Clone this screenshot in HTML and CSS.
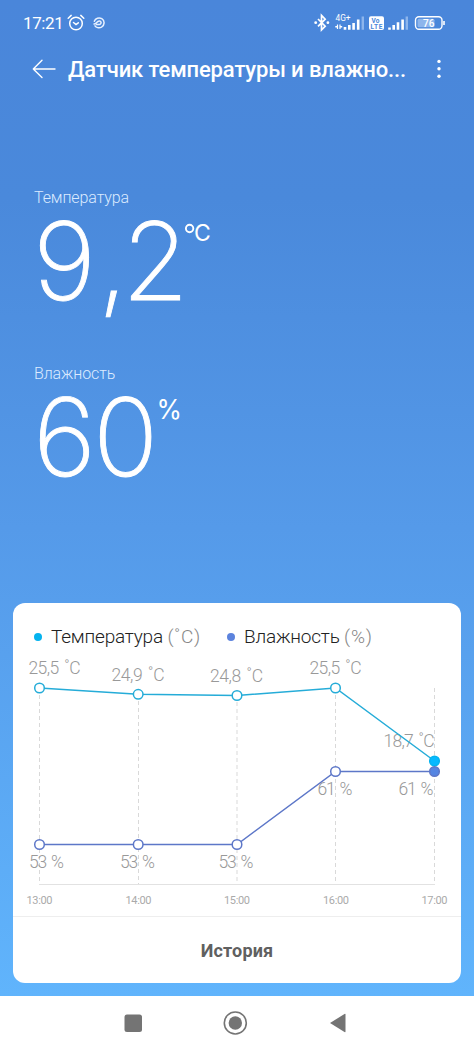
FILE: index.html
```
<!DOCTYPE html>
<html lang="ru">

<head>
  <meta charset="utf-8">
  <title>Датчик температуры и влажности</title>
  <link rel="stylesheet" href="styles.css">
</head>

<body>
  <div class="screen">
    <div class="status">
      <span class="time">17:21</span>
      <svg class="alarm" width="18" height="18" viewBox="0 0 18 18" fill="none" stroke="#fff" stroke-width="1.5" stroke-linecap="round">
        <circle cx="9" cy="9.5" r="6.3" />
        <path d="M1.2 4.2 4.2 1.4M16.8 4.2 13.8 1.4M6.5 8.5 9 10.5 11.3 8.8" />
      </svg>
      <svg class="swirl" width="12" height="12" viewBox="0 0 12 12" fill="none" stroke="#e6f0ff" stroke-width="1.5" stroke-linecap="round">
        <path d="M1.3 4.2C2.4 1.2 6 .2 8.8 1.6 12 3.5 11.8 8.3 8.5 10.2 6 11.5 3 10.5 2 8.8M1 7C3.2 7.2 3.6 4.2 6.3 4 8.2 3.9 8.7 6.4 7 7.2 5.8 7.7 4.8 7.4 3.6 7.6" />
      </svg>
      <svg class="signals" width="132" height="20" viewBox="0 0 132 20">
        <path d="M4 6 11.2 13.2 7.5 17V2.4L11.2 6.2 4 13.4" fill="none" stroke="#fff" stroke-width="1.7" />
        <circle cx="1.7" cy="9.7" r="1.4" fill="#fff" />
        <circle cx="13.9" cy="9.7" r="1.4" fill="#fff" />
        <text x="21.5" y="7.8" class="net" textLength="15" lengthAdjust="spacingAndGlyphs">4G+</text>
        <path d="M23.5 11.5V16M26 11.5V16" fill="none" stroke="#fff" stroke-width="1.2" />
        <path d="M21.3 13.8H23.5M26 13.8H28.2" fill="none" stroke="#fff" stroke-width="1.6" />
        <path d="M31 14v2.8M35.3 12v4.8M39.6 10v6.8M44.2 6.5v10.3" stroke="#fff" stroke-width="2.6" />
        <path d="M48.8 3.5v13.3M92.8 3.5v13.3" stroke="#8db5ec" stroke-width="2.4" />
        <rect x="55" y="3.3" width="15" height="13.7" rx="2" fill="#fff" />
        <text x="57.5" y="9.5" class="volte" textLength="8">Vo</text>
        <text x="56.5" y="15.8" class="volte" textLength="12">LTE</text>
        <path d="M75.5 14.5v2.3M79.7 12v4.8M84 9.3v7.5M88.6 6.5v10.3" stroke="#fff" stroke-width="2.6" />
        <rect x="101.5" y="3.7" width="26.5" height="12.6" rx="3.5" fill="none" stroke="#fff" stroke-width="1.4" />
        <rect x="103.5" y="5.7" width="17" height="8.6" rx="1.5" fill="#8db5ec" />
        <path d="M130 8v4" stroke="#fff" stroke-width="1.6" />
        <text x="109" y="13.5" class="charge" textLength="11.5">76</text>
      </svg>
    </div>

    <div class="header">
      <svg class="back" width="24" height="20" viewBox="0 0 24 20" fill="none" stroke="#fff" stroke-width="1.4" stroke-linecap="round" stroke-linejoin="round">
        <path d="M23 10H1.3M10 1.3 1.3 10 10 18.6" />
      </svg>
      <h1 class="title">Датчик температуры и влажно...</h1>
      <svg class="more" width="4" height="20" viewBox="0 0 4 20" fill="#fff">
        <circle cx="2" cy="2.4" r="1.7" />
        <circle cx="2" cy="9.8" r="1.7" />
        <circle cx="2" cy="17.2" r="1.7" />
      </svg>
    </div>

    <div class="metric">
      <div class="label">Температура</div>
      <svg class="reading" width="200" height="120" viewBox="0 0 200 120">
        <text class="value" x="-1 64 88" y="92">9,2</text>
        <circle cx="155.6" cy="20.5" r="3.7" fill="none" stroke="#fff" stroke-width="1.9" />
        <text class="unit" x="160" y="32.5">C</text>
      </svg>
    </div>
    <div class="metric">
      <div class="label">Влажность</div>
      <svg class="reading" width="200" height="120" viewBox="0 0 200 120">
        <text class="value" x="-1 59" y="92">60</text>
        <text class="unit percent" x="122.5" y="35" textLength="25.5" lengthAdjust="spacingAndGlyphs">%</text>
      </svg>
    </div>

    <div class="card">
      <div class="legend">
        <span class="dot"></span><span class="name name-temp">Температура <span class="gray">(˚C)</span></span>
        <span class="dot dot-hum"></span><span class="name">Влажность <span class="gray">(%)</span></span>
      </div>
      <svg class="chart" width="448" height="260" viewBox="0 0 448 260">
        <path class="grid" d="M26.5 32V228M125.5 38V228M224 39V228M322.5 32V228M421.5 32V228" />
        <path class="axis" d="M26 228.5H422" />
        <g class="values">
          <text x="15.5" y="18" textLength="52">25,5 ˚C</text>
          <text x="98.5" y="24.5" textLength="53">24,9 ˚C</text>
          <text x="197" y="25.5" textLength="53">24,8 ˚C</text>
          <text x="296.5" y="18" textLength="52">25,5 ˚C</text>
          <text x="370.5" y="91" textLength="51">18,7 ˚C</text>
          <text x="16" y="211.5" textLength="35">53 %</text>
          <text x="107" y="211.5" textLength="35">53 %</text>
          <text x="205.5" y="211.5" textLength="35">53 %</text>
          <text x="304.5" y="138.5" textLength="35">61 %</text>
          <text x="385.5" y="138.5" textLength="35">61 %</text>
        </g>
        <g class="temp">
          <polyline points="26.5,32 125.2,38.3 224,39.5 322.5,32 421.5,105" />
          <circle cx="26.5" cy="32" r="4.8" />
          <circle cx="125.2" cy="38.3" r="4.8" />
          <circle cx="224" cy="39.5" r="4.8" />
          <circle cx="322.5" cy="32" r="4.8" />
          <circle class="last" cx="421.5" cy="105" r="4.8" />
        </g>
        <g class="hum">
          <polyline points="26.5,188.5 125.2,188.5 224,188.5 322.5,115.5 421.5,115.5" />
          <circle cx="26.5" cy="188.5" r="4.8" />
          <circle cx="125.2" cy="188.5" r="4.8" />
          <circle cx="224" cy="188.5" r="4.8" />
          <circle cx="322.5" cy="115.5" r="4.8" />
          <circle class="last" cx="421.5" cy="115.5" r="4.8" />
        </g>
        <g class="hours">
          <text x="13.5" y="247.5" textLength="26">13:00</text>
          <text x="112.5" y="247.5" textLength="26">14:00</text>
          <text x="211" y="247.5" textLength="26">15:00</text>
          <text x="310" y="247.5" textLength="26">16:00</text>
          <text x="408.5" y="247.5" textLength="26">17:00</text>
        </g>
      </svg>
      <div class="history">История</div>
    </div>
  </div>

  <div class="navbar">
    <svg width="474" height="57" viewBox="0 0 474 57" fill="#747474">
      <rect x="124.5" y="18.5" width="17.5" height="17.5" rx="2.5" />
      <circle cx="235.3" cy="27" r="11" fill="none" stroke="#747474" stroke-width="1.6" />
      <circle cx="235.3" cy="27" r="6.7" />
      <path d="M330 27 344.5 18Q345.5 17.5 345.5 18.5V35.5Q345.5 36.5 344.5 36Z" />
    </svg>
  </div>
</body>

</html>
```

FILE: styles.css
```
body {
  margin: 0;
  width: 474px;
  height: 1053px;
  overflow: hidden;
  font-family: Roboto, "Liberation Sans", sans-serif;
  background: #fff;
}

svg {
  display: block;
  flex: none;
}

.screen {
  height: 996px;
  box-sizing: border-box;
  background: linear-gradient(#4a86da, #4a89db 20%, #559ae9 53%, #60b4fc);
  color: #fff;
}

.status {
  display: flex;
  align-items: center;
  height: 46px;
  padding: 0 29px 0 23px;
}

.time {
  width: 41px;
  font-size: 17px;
  line-height: 20px;
  letter-spacing: -0.4px;
  white-space: nowrap;
}

.alarm {
  margin-left: 3px;
}

.swirl {
  margin-left: 8px;
}

.signals {
  margin-left: auto;
  margin-right: -1px;
}

.net {
  font-size: 8.5px;
  fill: #fff;
}

.volte {
  font-size: 6.5px;
  font-weight: 700;
  fill: #4a86da;
}

.charge {
  font-size: 10px;
  font-weight: 500;
  fill: #fff;
}

.header {
  display: flex;
  align-items: center;
  height: 46px;
  padding: 0 33px 0 32px;
}

.title {
  margin: 2px 0 0 12px;
  font-size: 22px;
  font-weight: 500;
  line-height: 28px;
  letter-spacing: -0.13px;
  white-space: nowrap;
}

.more {
  margin-left: auto;
}

.metric {
  height: 176px;
  padding: 0 34px;
}

.header + .metric {
  padding-top: 96px;
}

.label {
  font-size: 16px;
  font-weight: 300;
  line-height: 20px;
  letter-spacing: -0.1px;
  color: #dcebff;
}

.reading {
  overflow: visible;
}

.value,
.unit {
  font-family: Inter, Roboto, sans-serif;
  fill: #fff;
}

.value {
  font-size: 108px;
  font-weight: 200;
  stroke: #fff;
  stroke-width: 0.9px;
}

.unit {
  font-size: 23px;
}

.percent {
  font-size: 27px;
}

.card {
  height: 380px;
  margin: 63px 13px 0;
  border-radius: 12px;
  background: #fff;
  color: #222;
}

.legend {
  display: flex;
  align-items: center;
  height: 39px;
  padding: 14px 0 0 21px;
}

.dot {
  flex: none;
  width: 8px;
  height: 8px;
  margin-right: 9px;
  border-radius: 50%;
  background: #05b3ef;
}

.dot-hum {
  background: #5c83dd;
}

.name {
  font-size: 19px;
  font-weight: 300;
  letter-spacing: -0.2px;
  white-space: nowrap;
}

.name-temp {
  width: 176px;
}

.gray {
  letter-spacing: 0.8px;
  color: #888;
}

.grid {
  fill: none;
  stroke: #d9d9d9;
  stroke-dasharray: 4 3;
}

.axis {
  stroke: #e2e2e2;
}

.values {
  font-size: 17.5px;
  font-weight: 300;
  word-spacing: 2px;
  fill: #999;
}

.hours {
  font-size: 11px;
  fill: #aaa;
}

.temp,
.hum {
  fill: #fff;
  stroke: #25acd8;
  stroke-width: 1.5;
}

.hum {
  stroke: #5d77c8;
}

.chart polyline {
  fill: none;
}

.temp .last {
  fill: #05b9ff;
  stroke: #05b3ef;
}

.hum .last {
  fill: #5585e2;
}

.history {
  height: 66px;
  border-top: 1px solid #eee;
  font-size: 18px;
  font-weight: 700;
  line-height: 68px;
  letter-spacing: 0.15px;
  text-align: center;
  color: #606060;
}

.navbar {
  height: 57px;
  background: #fff;
}
```
